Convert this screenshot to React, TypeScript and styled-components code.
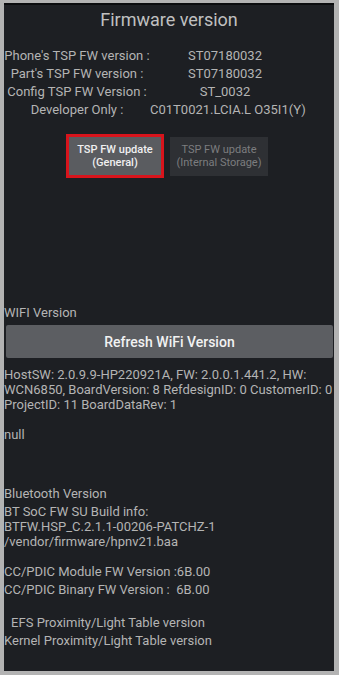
import styled, { createGlobalStyle } from "styled-components";

const GlobalStyle = createGlobalStyle`
  html, body {
    margin: 0;
    padding: 0;
    background: #b3b3b3;
  }
  body {
    font-family: Roboto, "Liberation Sans", sans-serif;
  }
`;

const Frame = styled.div`
  width: 339px;
  height: 675px;
  box-sizing: border-box;
  padding: 3px 5px 4px 4px;
  background: #b3b3b3;
`;

const Panel = styled.div`
  height: 100%;
  box-sizing: border-box;
  background: #1d1f23;
  border-top: 2px solid #0b0c0e;
  color: #b4b4b4;
  font-size: 13px;
  overflow: hidden;
`;

const Title = styled.h1`
  margin: 0;
  padding-top: 4px;
  font-size: 18px;
  font-weight: 400;
  line-height: 22px;
  text-align: center;
  color: #c0c0c0;
`;

const InfoTable = styled.div`
  display: grid;
  grid-template-columns: 146px 150px;
  margin-top: 16px;
  line-height: 18px;
`;

const Cell = styled.div`
  text-align: center;
  white-space: nowrap;
`;

const ButtonRow = styled.div`
  display: flex;
  justify-content: center;
  align-items: center;
  gap: 6px;
  margin-top: 15px;
  padding-right: 4px;
`;

const UpdateButton = styled.button<{ $active?: boolean }>`
  box-sizing: border-box;
  width: 98px;
  height: ${(p) => (p.$active ? "44px" : "39px")};
  padding: 0;
  font-family: Roboto, "Liberation Sans", sans-serif;
  font-size: 11px;
  font-weight: ${(p) => (p.$active ? 500 : 400)};
  line-height: 13px;
  color: ${(p) => (p.$active ? "#f0f0f0" : "#7c7d7f")};
  background: ${(p) => (p.$active ? "#5a5c60" : "#2e3034")};
  border: ${(p) => (p.$active ? "3px solid #d8141c" : "none")};
  border-radius: 0;
`;

const Section = styled.div<{ $top: number }>`
  margin-top: ${(p) => p.$top}px;
  line-height: 15px;
`;

const Label = styled.div`
  line-height: 18px;
`;

const RefreshButton = styled.button`
  display: block;
  box-sizing: border-box;
  width: 327px;
  height: 33px;
  margin: 3px 0 0 2px;
  border: none;
  border-radius: 2px;
  background: #5c5e62;
  color: #f2f2f2;
  font-family: Roboto, "Liberation Sans", sans-serif;
  font-size: 14px;
  font-weight: 500;
`;

const Para = styled.div<{ $top?: number }>`
  margin-top: ${(p) => p.$top ?? 0}px;
  line-height: 15px;
`;

const Pre = styled.div<{ $top: number }>`
  margin-top: ${(p) => p.$top}px;
  white-space: pre;
  line-height: 18px;
`;

const Centered = styled.div`
  display: inline-flex;
  flex-direction: column;
  align-items: center;
  line-height: 18px;
  margin-top: 15px;
`;

const rows = [
  ["Phone's TSP FW version :", "ST07180032"],
  ["Part's TSP FW version :", "ST07180032"],
  ["Config TSP FW Version :", "ST_0032"],
  ["Developer Only :", "C01T0021.LCIA.L O35I1(Y)"],
];

export default function App() {
  return (
    <>
      <GlobalStyle />
      <Frame>
        <Panel>
          <Title>Firmware version</Title>
          <InfoTable>
            {rows.flatMap(([k, v]) => [
              <Cell key={k}>{k}</Cell>,
              <Cell key={k + "-v"}>{v}</Cell>,
            ])}
          </InfoTable>
          <ButtonRow>
            <UpdateButton $active>
              TSP FW update
              <br />
              (General)
            </UpdateButton>
            <UpdateButton>
              TSP FW update
              <br />
              (Internal Storage)
            </UpdateButton>
          </ButtonRow>

          <Section $top={126}>
            <Label>WIFI Version</Label>
            <RefreshButton>Refresh WiFi Version</RefreshButton>
            <Para $top={9}>
              HostSW: 2.0.9.9-HP220921A, FW: 2.0.0.1.441.2, HW: WCN6850,
              BoardVersion: 8 RefdesignID: 0 CustomerID: 0 ProjectID: 11
              BoardDataRev: 1
            </Para>
            <Para $top={15}>null</Para>
          </Section>

          <Section $top={43}>
            <Label>Bluetooth Version</Label>
            <Para $top={1}>
              BT SoC FW SU Build info:
              <br />
              BTFW.HSP_C.2.1.1-00206-PATCHZ-1
              <br />
              /vendor/firmware/hpnv21.baa
            </Para>
            <Pre $top={14}>
              {"CC/PDIC Module FW Version :6B.00\nCC/PDIC Binary FW Version :  6B.00"}
            </Pre>
            <Centered>
              <span>EFS Proximity/Light Table version</span>
              <span>Kernel Proximity/Light Table version</span>
            </Centered>
          </Section>
        </Panel>
      </Frame>
    </>
  );
}
